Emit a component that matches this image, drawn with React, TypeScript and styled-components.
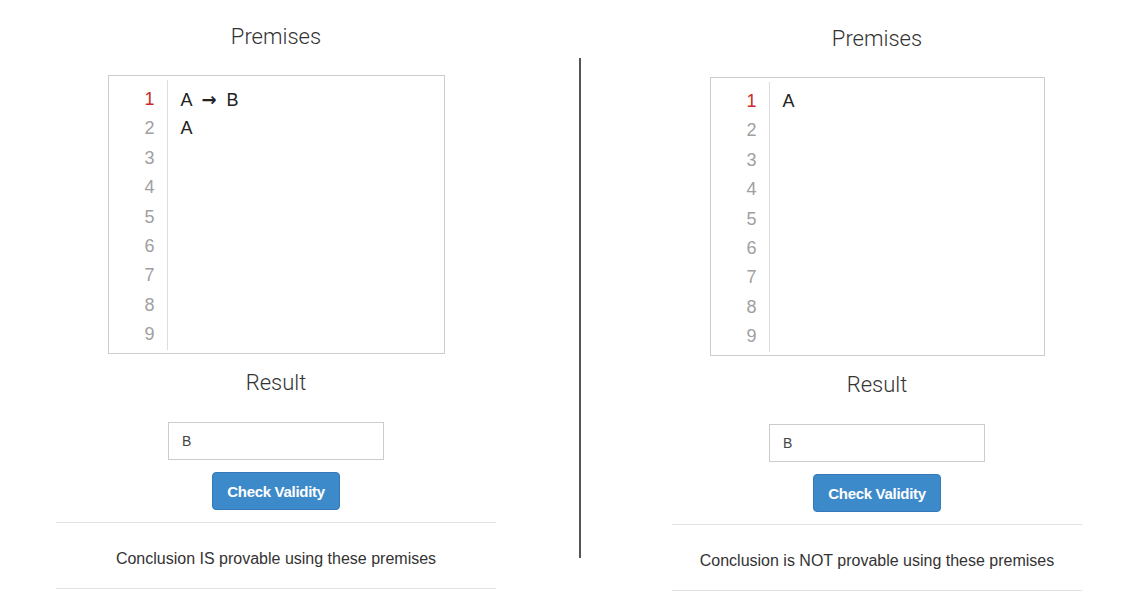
import * as React from "react";
import styled, { createGlobalStyle } from "styled-components";

const GlobalStyle = createGlobalStyle`
	html, body {
		margin: 0;
		padding: 0;
		background: #ffffff;
		font-family: "Liberation Sans", Arial, sans-serif;
		color: #333333;
	}
`;

const Page = styled.div`
	display: flex;
	align-items: flex-start;
	width: 1138px;
	height: 612px;
	padding-left: 56px;
	box-sizing: border-box;
	overflow: hidden;
`;

const Column = styled.section<{ width: number; top: number }>`
	display: flex;
	flex-direction: column;
	align-items: center;
	width: ${(p) => p.width}px;
	padding-top: ${(p) => p.top}px;
	flex-shrink: 0;
`;

const Divider = styled.div`
	width: 2px;
	height: 500px;
	margin: 58px 91px 0 83px;
	background: #555555;
	flex-shrink: 0;
`;

const Heading = styled.h2`
	margin: 0;
	font-family: Roboto, "Liberation Sans", sans-serif;
	font-weight: 300;
	font-size: 22px;
	line-height: 24px;
	color: #333333;
`;

const EditorBox = styled.div<{ width: number }>`
	display: flex;
	width: ${(p) => p.width}px;
	height: 279px;
	box-sizing: border-box;
	margin-top: 26px;
	padding: 4px 0;
	border: 1px solid #cccccc;
	background: #ffffff;
`;

const Gutter = styled.div`
	display: flex;
	flex-direction: column;
	align-items: flex-end;
	width: 59px;
	box-sizing: border-box;
	padding: 5px 12px 0 0;
	border-right: 1px solid #dddddd;
	height: 270px;
`;

const Lines = styled.div`
	display: flex;
	flex-direction: column;
	padding: 5px 0 0 13px;
`;

const Cell = styled.div<{ active?: boolean; muted?: boolean }>`
	height: 29.4px;
	line-height: 29.4px;
	font-size: 18px;
	color: ${(p) => (p.active ? "#cc2a2a" : p.muted ? "#a0a0a0" : "#222222")};
	white-space: pre;
`;

const Arrow = styled.span`
	margin: 0 5px;
	font-family: "DejaVu Sans", sans-serif;
	font-size: 18px;
	font-weight: 700;
`;

const ResultHeading = styled(Heading)`
	margin-top: 17px;
`;

const ResultInput = styled.input`
	width: 216px;
	height: 38px;
	box-sizing: border-box;
	margin-top: 27px;
	padding: 0 13px;
	border: 1px solid #cccccc;
	font-family: "Liberation Sans", Arial, sans-serif;
	font-size: 14px;
	color: #444444;
	outline: none;
`;

const CheckButton = styled.button`
	width: 128px;
	height: 38px;
	margin-top: 12px;
	border: 1px solid #3579b8;
	border-radius: 4px;
	background: #3d8acb;
	color: #ffffff;
	font-family: "Liberation Sans", Arial, sans-serif;
	font-weight: 700;
	font-size: 15px;
	letter-spacing: -0.3px;
	cursor: pointer;
`;

const Verdict = styled.div`
	align-self: stretch;
	margin-top: 12px;
	padding: 25px 0 19px;
	border-top: 1px solid #e3e3e3;
	border-bottom: 1px solid #e3e3e3;
	text-align: center;
	font-size: 16px;
	line-height: 21px;
	color: #333333;
`;

const renderPremise = (line: string): React.ReactNode => {
	const parts = line.split("→");
	return parts.map((part, index) => (
		<React.Fragment key={`part_${index}`}>
			{index > 0 && <Arrow>→</Arrow>}
			{part}
		</React.Fragment>
	));
};

type ProofProps = {
	width: number;
	top: number;
	boxWidth: number;
	premises: string[];
	result: string;
	verdict: string;
};

const ProofPanel = ({ width, top, boxWidth, premises, result, verdict }: ProofProps) => {
	const numbers = Array.from({ length: 9 }, (_, i) => i + 1);

	return (
		<Column width={width} top={top}>
			<Heading>Premises</Heading>
			<EditorBox width={boxWidth}>
				<Gutter>
					{numbers.map((n) => (
						<Cell key={`num_${n}`} active={n === 1} muted={n !== 1}>
							{n}
						</Cell>
					))}
				</Gutter>
				<Lines>
					{premises.map((line, index) => (
						<Cell key={`line_${index}`}>{renderPremise(line)}</Cell>
					))}
				</Lines>
			</EditorBox>
			<ResultHeading>Result</ResultHeading>
			<ResultInput defaultValue={result} />
			<CheckButton type="button">Check Validity</CheckButton>
			<Verdict>{verdict}</Verdict>
		</Column>
	);
};

const App = (): JSX.Element => (
	<>
		<GlobalStyle />
		<Page>
			<ProofPanel
				width={440}
				top={25}
				boxWidth={337}
				premises={["A → B", "A"]}
				result="B"
				verdict="Conclusion IS provable using these premises"
			/>
			<Divider />
			<ProofPanel
				width={410}
				top={27}
				boxWidth={335}
				premises={["A"]}
				result="B"
				verdict="Conclusion is NOT provable using these premises"
			/>
		</Page>
	</>
);

export default App;
